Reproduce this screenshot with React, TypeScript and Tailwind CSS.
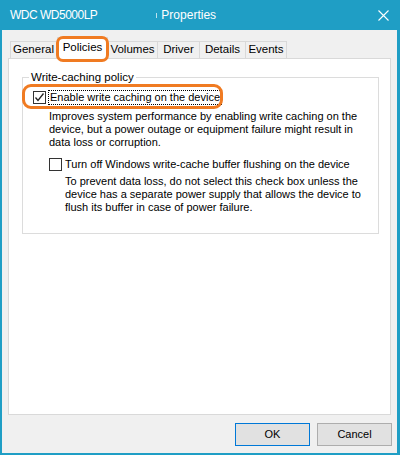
import React from "react";

const font = { fontFamily: '"Liberation Sans", Arial, sans-serif' };

const tabs = [
  { label: "General", w: "w-[47px]" },
  { label: "Policies", w: "w-[51px]", active: true },
  { label: "Volumes", w: "w-[50px]" },
  { label: "Driver", w: "w-[42px]" },
  { label: "Details", w: "w-[46px]" },
  { label: "Events", w: "w-[41px]" },
];

function CheckBox({ checked }: { checked?: boolean }) {
  return (
    <span className="w-[13px] h-[13px] shrink-0 border border-[#333333] bg-white flex items-center justify-center">
      {checked && (
        <svg width="11" height="11" viewBox="0 0 11 11">
          <path d="M1.5 5.5 L4 8.5 L9.5 1.5" fill="none" stroke="#222" strokeWidth="1.3" />
        </svg>
      )}
    </span>
  );
}

export default function App() {
  return (
    <div
      className="relative w-[400px] h-[455px] bg-[#1f9ec5] flex flex-col pl-[2px] pr-[3px] pb-[2px] text-[11px] text-black"
      style={font}
    >
      {/* title bar */}
      <div className="h-[30px] shrink-0 flex items-center text-white text-[12px] pl-[8px]">
        <span className="tracking-[-0.5px]">WDC WD5000LP</span>
        <span className="ml-[59px] w-px h-[5px] bg-white/70" />
        <span className="ml-[4px]">Properties</span>
        <svg className="ml-auto mr-[8px]" width="11" height="11" viewBox="0 0 11 11">
          <path d="M0.5 0.5 L10.5 10.5 M10.5 0.5 L0.5 10.5" stroke="white" strokeWidth="1.1" />
        </svg>
      </div>

      {/* body */}
      <div className="flex-1 bg-[#f0f0f0] flex flex-col pl-[6px] pr-[6px] pt-[7px]">
        <div className="flex items-end h-[21px] pl-[2px] relative z-10 text-[11.5px]">
          {tabs.map((t) =>
            t.active ? (
              <div
                key={t.label}
                className={`${t.w} h-[22px] -mb-px bg-white border border-b-0 border-[#d9d9d9] flex items-center justify-center pb-[2px]`}
              >
                {t.label}
              </div>
            ) : (
              <div
                key={t.label}
                className={`${t.w} h-[17px] bg-[#f0f0f0] border border-b-0 border-l-0 first:border-l border-[#d9d9d9] flex items-center justify-center`}
              >
                {t.label}
              </div>
            )
          )}
        </div>

        <div className="h-[357px] bg-white border border-[#d9d9d9] pt-[11px]">
          <fieldset className="border border-[#dcdcdc] ml-[13px] mr-[11px] h-[164px]">
            <legend className="ml-[6px] px-[2px] leading-[14px] text-[11.5px]">Write-caching policy</legend>
            <div className="pl-[10px] pr-[4px]">
              <div className="flex items-center mt-[6px]">
                <CheckBox checked />
                <span className="ml-[2px] px-px leading-[13px] border border-dotted border-black">
                  Enable write caching on the device
                </span>
              </div>
              <p className="ml-[16px] mt-[5px] leading-[13px]">
                Improves system performance by enabling write caching on the device, but a power outage or equipment failure might result in data loss or corruption.
              </p>
              <div className="ml-[16px] mt-[9px] flex items-center">
                <CheckBox />
                <span className="ml-[3px] leading-[13px]">
                  Turn off Windows write-cache buffer flushing on the device
                </span>
              </div>
              <p className="ml-[32px] mt-[4px] leading-[13px]">
                To prevent data loss, do not select this check box unless the device has a separate power supply that allows the device to flush its buffer in case of power failure.
              </p>
            </div>
          </fieldset>
        </div>

        <div className="flex justify-end gap-[7px] mt-[8px] -mr-px">
          <button className="w-[75px] h-[23px] bg-[#e1e1e1] border border-[#0078d7]">
            OK
          </button>
          <button className="w-[75px] h-[23px] bg-[#e1e1e1] border border-[#adadad]">
            Cancel
          </button>
        </div>
      </div>

      {/* annotation highlights */}
      <div className="absolute left-[56px] top-[36px] w-[53px] h-[26px] rounded-[7px] border-[3px] border-[#f07b22] z-20" />
      <div className="absolute left-[22px] top-[84px] w-[201px] h-[25px] rounded-[9px] border-[3px] border-[#f07b22] z-20" />
    </div>
  );
}
